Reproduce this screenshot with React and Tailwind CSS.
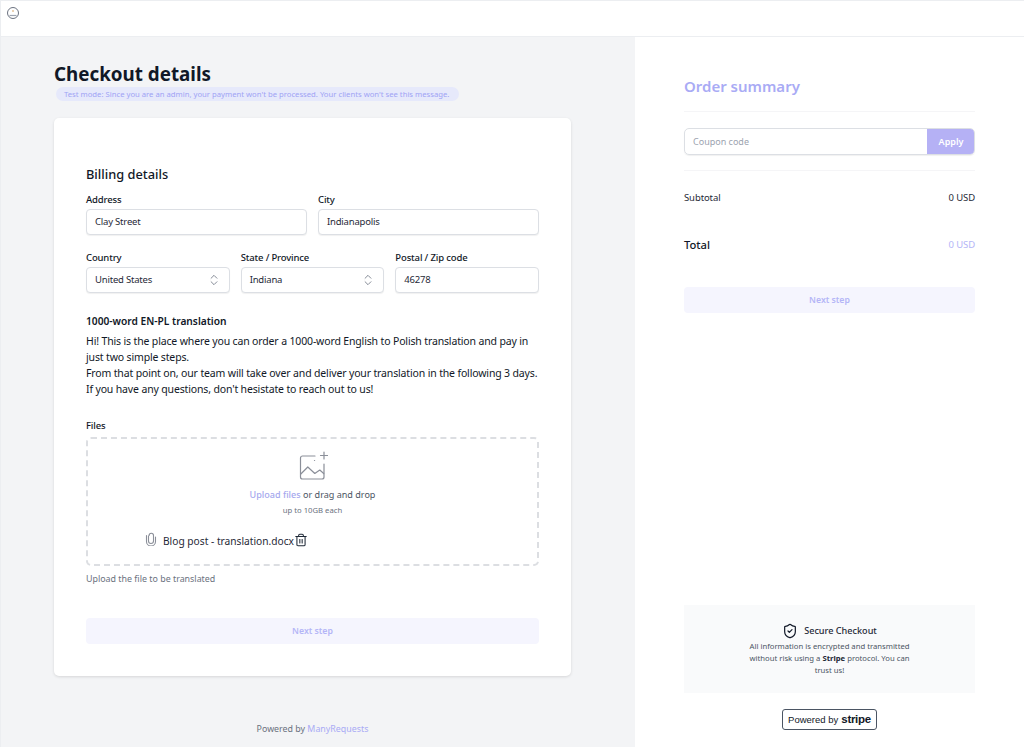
import { ChevronsUpDown, Trash2, ShieldCheck } from 'lucide-react'

function Field({ label, value, select, className }) {
  return (
    <div className={className}>
      <div className="text-[9.5px] leading-[16px] font-medium tracking-[-0.15px] text-[#111827]">{label}</div>
      <div className="mt-[1px] h-[26px] flex items-center justify-between px-2 border border-[#dcdfe4] rounded-[4px] shadow-[0_1px_1px_rgba(0,0,0,0.06)] text-[9.5px] tracking-[-0.2px] text-[#1f2937] bg-white">
        <span className="pt-[1px]">{value}</span>
        {select && <ChevronsUpDown size={14} strokeWidth={1.4} className="text-[#6b7280]" />}
      </div>
    </div>
  )
}

function NextStep() {
  return (
    <div className="h-[26px] pt-[2px] rounded-[4px] bg-[#f5f5fe] flex items-center justify-center text-[8.7px] font-semibold text-[#b4b5f7]">Next step</div>
  )
}

export default function App() {
  return (
    <div className="w-[1024px] h-[747px] overflow-hidden bg-white flex flex-col font-['Noto_Sans','Liberation_Sans',sans-serif] border-t border-l border-[#eceef1]">
      <header className="h-[36px] shrink-0 bg-white border-b border-[#eceef1] pl-[5px] pt-[5px]">
        <svg width="14" height="14" viewBox="0 0 14 14" fill="none">
          <circle cx="7" cy="7" r="5.5" stroke="#6b7280" strokeWidth="1" />
          <path d="M3.5 9.5h7" stroke="#9ca3af" strokeWidth="1.2" />
          <path d="M6 5h2" stroke="#d6a66a" strokeWidth="1.2" />
        </svg>
      </header>

      <div className="flex-1 flex min-h-0">
        <main className="w-[634px] shrink-0 bg-[#f3f4f6] pl-[53px] flex flex-col">
          <h1 className="mt-[24px] text-[18.8px] leading-[26px] font-bold text-[#111827]">Checkout details</h1>
          <div className="ml-[2px] w-[403px] h-[14px] rounded-full bg-[#e6e9fb] pl-[8px] text-[7.7px] leading-[14px] text-[#a0a3f5] whitespace-nowrap">
            Test mode: Since you are an admin, your payment won't be processed. Your clients won't see this message.
          </div>

          <div className="mt-[17px] w-[517px] h-[558px] bg-white rounded-[5px] shadow-[0_1px_3px_rgba(0,0,0,0.12)] px-[32px] pt-[46px]">
            <h2 className="text-[12.8px] leading-[20px] font-medium text-[#111827]">Billing details</h2>
            <div className="mt-[8px] flex gap-[11px]">
              <Field className="w-[221px]" label="Address" value="Clay Street" />
              <Field className="w-[221px]" label="City" value="Indianapolis" />
            </div>
            <div className="mt-[15px] flex gap-[11px]">
              <Field className="w-[144px]" label="Country" value="United States" select />
              <Field className="w-[144px]" label="State / Province" value="Indiana" select />
              <Field className="w-[144px]" label="Postal / Zip code" value="46278" />
            </div>

            <div className="mt-[20px] text-[10.2px] leading-[16px] font-semibold text-[#111827]">1000-word EN-PL translation</div>
            <p className="mt-[4px] text-[10.5px] leading-[16px] tracking-[-0.15px] text-[#111827]">
              Hi! This is the place where you can order a 1000-word English to Polish translation and pay in just two simple steps.
              <br />
              From that point on, our team will take over and deliver your translation in the following 3 days.
              <br />
              If you have any questions, don't hesistate to reach out to us!
            </p>

            <div className="mt-[22px] text-[9.5px] leading-[14px] font-medium tracking-[-0.15px] text-[#111827]">Files</div>
            <div className="mt-[4px] h-[129px] border-2 border-dashed border-[#dcdee2] rounded-[5px] flex flex-col items-center pt-[11px] relative">
              <svg width="30" height="30" viewBox="0 0 30 30" fill="none" stroke="#8b8f99" strokeWidth="1.2" strokeLinecap="round" strokeLinejoin="round">
                <path d="M17 6H4.500A2 2 0 0 0 2.500 8v19a2 2 0 0 0 2 2h19.500a2 2 0 0 0 2-2V14" />
                <path d="M2.800 24l7-7 7 6.500 5-3.500 3.900 3.500" />
                <path d="M16.500 10.500h.1" />
                <path d="M26 2v7M22.500 5.500h7" />
              </svg>
              <div className="mt-[8px] text-[9.05px] leading-[14px] text-[#4b5563]">
                <span className="text-[#a5a8ee] font-medium">Upload files</span> or drag and drop
              </div>
              <div className="mt-[1px] text-[7.7px] leading-[14px] text-[#6b7280]">up to 10GB each</div>
              <div className="absolute left-[57px] top-[93px] flex items-center">
                <svg width="12" height="14" viewBox="0 0 12 14" fill="none" stroke="#8b8f99" strokeWidth="1.1" strokeLinecap="round" className="-mt-[3px]">
                  <path d="M3.500 4v5a2.500 2.500 0 0 0 5 0V3.500a2.200 2.200 0 0 0-4.400 0" />
                  <path d="M1.500 3.500v6a4.500 4.500 0 0 0 9 0V5" />
                </svg>
                <span className="ml-[6px] pt-[1px] text-[10.2px] leading-[16px] text-[#1f2937]">Blog post - translation.docx</span>
                <Trash2 size={14} strokeWidth={1.8} className="-mt-[1px] text-[#1f2937]" />
              </div>
            </div>
            <div className="mt-[6px] text-[8.9px] leading-[14px] text-[#6b7280]">Upload the file to be translated</div>

            <div className="mt-[32px]"><NextStep /></div>
          </div>

          <div className="mt-[46px] w-[517px] text-center text-[8.85px] leading-[14px] text-[#6b7280]">
            Powered by <span className="text-[#a9abf5]">ManyRequests</span>
          </div>
        </main>

        <aside className="flex-1 bg-white pl-[49px] pr-[49px] flex flex-col">
          <h2 className="mt-[37px] text-[15px] leading-[24px] font-semibold text-[#a9abf5]">Order summary</h2>
          <div className="mt-[13px] h-px bg-[#f5f5f7]" />
          <div className="mt-[16px] h-[27px] flex rounded-[5px] border border-[#dcdfe4] shadow-[0_1px_1px_rgba(0,0,0,0.06)] overflow-hidden">
            <div className="flex-1 pl-2 pt-[1px] flex items-center text-[9px] text-[#9ca3af]">Coupon code</div>
            <div className="w-[48px] -my-[1px] -mr-[1px] pt-[1px] bg-[#b5b1f5] flex items-center justify-center text-[9px] font-semibold text-white">Apply</div>
          </div>
          <div className="mt-[15px] h-px bg-[#f5f5f7]" />
          <div className="mt-[20px] flex justify-between text-[9.5px] leading-[14px] tracking-[-0.1px] text-[#1f2937]">
            <span>Subtotal</span>
            <span>0 USD</span>
          </div>
          <div className="mt-[31px] flex justify-between items-center">
            <span className="text-[11.2px] leading-[18px] font-medium text-[#111827]">Total</span>
            <span className="text-[9.5px] tracking-[-0.1px] text-[#b4b5f7]">0 USD</span>
          </div>
          <div className="mt-[33px]"><NextStep /></div>

          <div className="mt-auto h-[88px] bg-[#f9fafb] flex flex-col items-center pt-[17px]">
            <div className="flex items-center text-[9.1px] leading-[16px] font-medium text-[#1f2937]">
              <ShieldCheck size={16} strokeWidth={1.8} className="text-[#111827] mr-[6px]" />
              <span className="pt-[1px]">Secure Checkout</span>
            </div>
            <div className="mt-[1px] text-center text-[7.7px] leading-[12px] text-[#4b5563]">
              <div>All information is encrypted and transmitted</div>
              <div>without risk using a <b className="text-[#1f2937]">Stripe</b> protocol. You can</div>
              <div>trust us!</div>
            </div>
          </div>
          <div className="mt-[16px] mb-[17px] pt-[1px] self-center w-[95px] h-[21px] rounded-[3px] border border-[#4b5563] flex items-center justify-center text-[9.5px] text-[#111827] font-['Liberation_Sans',sans-serif]">
            Powered by <span className="ml-[3px] text-[11.5px] font-bold tracking-tight">stripe</span>
          </div>
        </aside>
      </div>
    </div>
  )
}
